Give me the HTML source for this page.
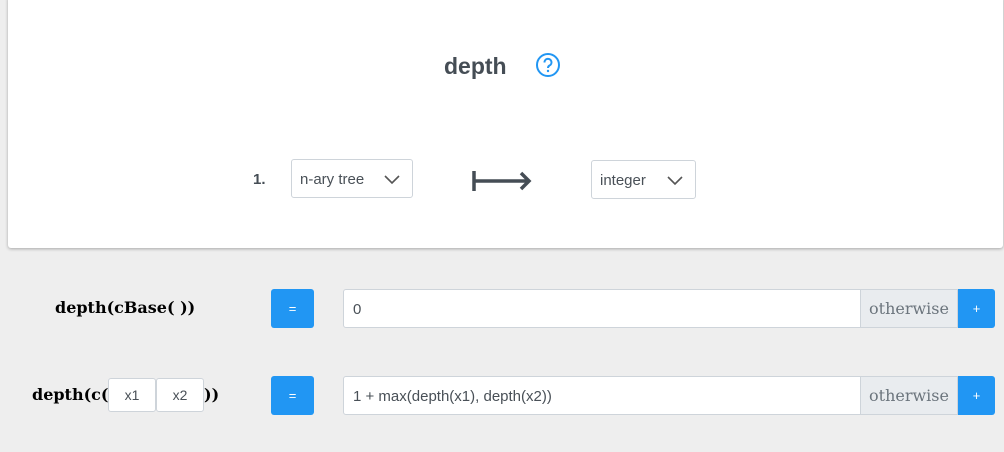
<!DOCTYPE html>
<html><head><style>
body{margin:0;width:1004px;height:452px;background:#eeeeee;position:relative;overflow:hidden;font-family:"Liberation Sans",Roboto,sans-serif;color:#495057}
.a{position:absolute}
.card{left:8px;top:-4px;width:995px;height:252px;background:#fff;border-radius:3px;box-shadow:0 1px 3px rgba(0,0,0,.3)}
.sel{border:1px solid #ced4da;border-radius:3px;background:#fff;font-size:15px;box-sizing:border-box;line-height:39px;padding-left:8px}
.chev{position:absolute;right:12px;top:15px}
.btn{background:#2196f3;color:#fff;border-radius:3px;text-align:center;font-size:13px}
.inp{background:#fff;border:1px solid #ced4da;box-sizing:border-box;border-radius:3px 0 0 3px;font-size:15px;padding-left:9px;line-height:39px}
.oth{background:#e9ecef;border:1px solid #ced4da;border-left:none;box-sizing:border-box;font-family:"DejaVu Serif","Liberation Serif",serif;font-size:16px;color:#6c757d;text-align:center;line-height:37px}
.lbl{font-family:"DejaVu Serif","Liberation Serif",serif;font-weight:bold;font-size:16px;color:#000}
.arg{background:#fff;border:1px solid #ced4da;border-radius:3px;box-sizing:border-box;font-size:14px;text-align:center;line-height:33px;color:#495057}
</style></head><body>
<div class="a card"></div>
<div class="a" style="left:444px;top:53px;font-size:23px;font-weight:bold;color:#454d55">depth</div>
<svg class="a" style="left:535px;top:52px" width="26" height="26" viewBox="0 0 26 26"><circle cx="13" cy="13" r="11" fill="none" stroke="#2196f3" stroke-width="2"/><path d="M9.5 10.5a3.5 3.5 0 1 1 5 3c-1 .6-1.5 1.2-1.5 2.5" fill="none" stroke="#2196f3" stroke-width="2"/><circle cx="13" cy="19" r="1.2" fill="#2196f3"/></svg>
<div class="a" style="left:253px;top:171px;font-size:15px;font-weight:bold;color:#454d55">1.</div>
<div class="a sel" style="left:291px;top:159px;width:122px;height:39px">n-ary tree<svg class="chev" width="16" height="10"><path d="M1 1l7 7 7-7" fill="none" stroke="#555" stroke-width="1.6"/></svg></div>
<svg class="a" style="left:472px;top:170px" width="62" height="22"><path d="M2 1v20M2 11h55M49 3l8 8-8 8" fill="none" stroke="#454d55" stroke-width="3.5"/></svg>
<div class="a sel" style="left:591px;top:160px;width:105px;height:39px">integer<svg class="chev" width="16" height="10"><path d="M1 1l7 7 7-7" fill="none" stroke="#555" stroke-width="1.6"/></svg></div>

<div class="a lbl" style="left:55px;top:298px">depth(cBase( ))</div>
<div class="a btn" style="left:271px;top:289px;width:43px;height:39px;line-height:39px">=</div>
<div class="a inp" style="left:343px;top:289px;width:518px;height:39px">0</div>
<div class="a oth" style="left:861px;top:289px;width:97px;height:39px">otherwise</div>
<div class="a btn" style="left:958px;top:289px;width:37px;height:39px;line-height:39px;border-radius:0 3px 3px 0">+</div>

<div class="a lbl" style="left:32px;top:385px">depth(c(</div>
<div class="a arg" style="left:108px;top:378px;width:48px;height:34px">x1</div>
<div class="a arg" style="left:156px;top:378px;width:48px;height:34px">x2</div>
<div class="a lbl" style="left:204px;top:385px">))</div>
<div class="a btn" style="left:271px;top:376px;width:43px;height:39px;line-height:39px">=</div>
<div class="a inp" style="left:343px;top:376px;width:518px;height:39px">1 + max(depth(x1), depth(x2))</div>
<div class="a oth" style="left:861px;top:376px;width:97px;height:39px">otherwise</div>
<div class="a btn" style="left:958px;top:376px;width:37px;height:39px;line-height:39px;border-radius:0 3px 3px 0">+</div>
</body></html>
